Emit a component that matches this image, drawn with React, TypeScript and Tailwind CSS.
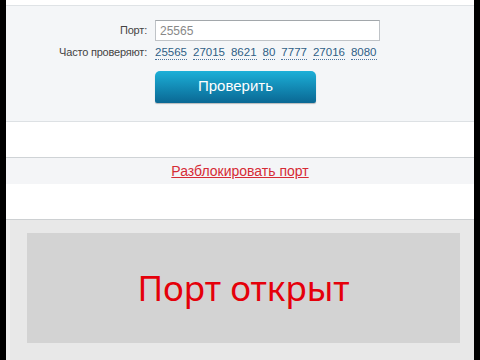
const ports = ["25565", "27015", "8621", "80", "7777", "27016", "8080"];

export default function App() {
  return (
    <div className="flex h-[360px] w-[480px] overflow-hidden bg-black font-['Liberation_Sans',Arial,sans-serif]">
      <div className="ml-[6px] flex w-[468px] flex-col bg-white">
        <div className="h-[6px] shrink-0 border-b border-[#dfe3e6] bg-white" />

        <section className="h-[116px] shrink-0 border-b border-[#dde1e4] bg-[#f4f6f8] pt-[14px]">
          <div className="grid grid-cols-[141px_auto] items-center gap-x-2">
            <span className="text-right text-[11px] tracking-[-0.2px] text-[#444]">Порт:</span>
            <input
              readOnly
              value="25565"
              className="h-[21px] w-[225px] border border-[#bfc3c7] border-t-[#a2a7ab] bg-white px-[4px] text-[12px] text-[#888] outline-none"
            />
            <span className="mt-[3px] text-right text-[11px] tracking-[-0.2px] text-[#444]">Часто проверяют:</span>
            <div className="mt-[3px] flex gap-[6px] text-[11.5px] text-[#2f5f86]">
              {ports.map((p) => (
                <span key={p} className="border-b border-dotted border-[#4c739a] leading-[14px]">
                  {p}
                </span>
              ))}
            </div>
          </div>
          <div className="ml-[149px] mt-[10px]">
            <button
              type="button"
              className="flex h-[32px] w-[161px] items-center justify-center rounded-t-[5px] rounded-b-[2px] bg-gradient-to-b from-[#1db0d8] to-[#0a6894] text-[15px] text-white shadow-[0_1px_1px_rgba(0,0,0,0.25)]"
            >
              Проверить
            </button>
          </div>
        </section>

        <div className="h-[36px] shrink-0 border-b border-[#cfd3d6] bg-white" />

        <div className="flex h-[26px] shrink-0 items-center justify-center bg-[#f4f5f7]">
          <a href="#" className="text-[14px] text-[#d62b35] underline">
            Разблокировать порт
          </a>
        </div>

        <div className="h-[36px] shrink-0 border-b border-[#cdd0d2] bg-white" />

        <div className="flex-1 border-l-[4px] border-[#efefef] bg-[#e8e8e8] pl-[17px] pr-[14px] pt-[13px]">
          <div className="flex h-[110px] items-center justify-center bg-[#d3d3d3]">
            <span className="font-['Noto_Sans',sans-serif] text-[35px] text-[#e5000a]">Порт открыт</span>
          </div>
        </div>
      </div>
    </div>
  );
}
